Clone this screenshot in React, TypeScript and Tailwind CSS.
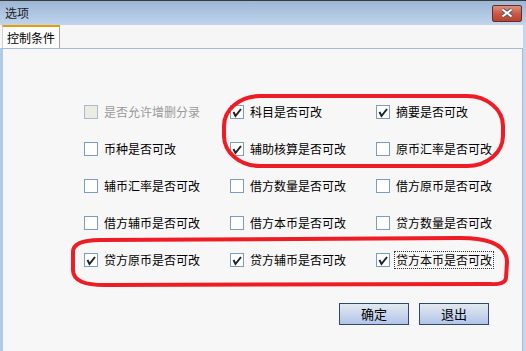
import React from "react";

type Item = { label: string; checked?: boolean; disabled?: boolean; focused?: boolean };

const rows: Item[][] = [
  [
    { label: "是否允许增删分录", disabled: true },
    { label: "科目是否可改", checked: true },
    { label: "摘要是否可改", checked: true },
  ],
  [
    { label: "币种是否可改" },
    { label: "辅助核算是否可改", checked: true },
    { label: "原币汇率是否可改" },
  ],
  [
    { label: "辅币汇率是否可改" },
    { label: "借方数量是否可改" },
    { label: "借方原币是否可改" },
  ],
  [
    { label: "借方辅币是否可改" },
    { label: "借方本币是否可改" },
    { label: "贷方数量是否可改" },
  ],
  [
    { label: "贷方原币是否可改", checked: true },
    { label: "贷方辅币是否可改", checked: true },
    { label: "贷方本币是否可改", checked: true, focused: true },
  ],
];

function CheckBox({ item }: { item: Item }) {
  return (
    <div className="flex h-[37px] w-[148px] items-center">
      <span
        className={
          item.disabled
            ? "flex h-[14px] w-[14px] shrink-0 items-center justify-center border border-[#a9bccf] bg-[#ecebe6]"
            : "flex h-[14px] w-[14px] shrink-0 items-center justify-center border border-[#7c9dbd] bg-white"
        }
      >
        {item.checked && (
          <svg width="12" height="12" viewBox="0 0 12 12">
            <path d="M2.5 6 L4.5 10 L10 3" fill="none" stroke="#222" strokeWidth="2" strokeLinejoin="miter" />
          </svg>
        )}
      </span>
      <span
        className={
          "ml-[5px] whitespace-nowrap px-[1px] text-[12px] leading-[16px] " +
          (item.disabled ? "text-[#9a9a9a]" : "text-black") +
          (item.focused ? " outline outline-1 outline-dotted outline-[#333]" : "")
        }
      >
        {item.label}
      </span>
    </div>
  );
}

export default function App() {
  return (
    <div className="relative flex h-[351px] w-[526px] flex-col overflow-hidden bg-[#f6f6f6] font-['Noto_Sans_CJK_SC',sans-serif]">
      {/* title bar */}
      <div className="flex h-[25px] shrink-0 items-center justify-between border-t border-[#3a3a3a] bg-gradient-to-b from-[#9cb6d4] to-[#c0d5ec] pl-[5px] pr-[4px]">
        <span className="text-[12px] text-[#1a1a1a]">选项</span>
        <button className="flex h-[17px] w-[30px] items-center justify-center rounded-[2px] border border-[#6b2a24] bg-gradient-to-b from-[#dc9283] via-[#c85a49] to-[#b9412f]">
          <svg width="14" height="10" viewBox="0 0 14 10">
            <path d="M2.5 1.5 L11.5 8.5 M11.5 1.5 L2.5 8.5" stroke="#5a5a5a" strokeWidth="4" />
            <path d="M2.5 1.5 L11.5 8.5 M11.5 1.5 L2.5 8.5" stroke="#fff" strokeWidth="2" />
          </svg>
        </button>
      </div>

      <div className="flex flex-1 flex-col border-r-[3px] border-[#c3d7ed]">
        {/* tab strip */}
        <div className="flex h-[23px] shrink-0 items-end pl-[2px]">
          <div className="flex h-[23px] w-[58px] items-center justify-center border-t-2 border-r border-l border-t-[#e5a000] border-r-[#a3a3a3] border-l-[#d0d0d0] bg-[#fdfdfd] text-[12px] text-black">
            控制条件
          </div>
        </div>

        {/* panel */}
        <div className="flex flex-1 flex-col border-t border-r border-l-[3px] border-t-[#a7bdd5] border-r-[#a5bcd6] border-l-[#b1cbe7] bg-[#f7f7f7] pt-[44px] pl-[81px]">
          {rows.map((row, i) => (
            <div key={i} className="flex">
              {row.map((item) => (
                <CheckBox key={item.label} item={item} />
              ))}
            </div>
          ))}
          <div className="mt-[25px] flex gap-[10px] pl-[255px]">
            <button className="h-[22px] w-[70px] border border-[#2c4a6c] bg-gradient-to-b from-[#e2e9f0] to-[#b3c4ea] text-[13px] text-black">
              确定
            </button>
            <button className="h-[22px] w-[70px] border border-[#2c4a6c] bg-gradient-to-b from-[#e2e9f0] to-[#b3c4ea] text-[13px] text-black">
              退出
            </button>
          </div>
        </div>
      </div>

      {/* red annotations drawn on top of the screenshot */}
      <svg className="pointer-events-none absolute left-0 top-0" width="526" height="351" viewBox="0 0 526 351">
        <rect x="224" y="96" width="279" height="70" rx="36" ry="30" fill="none" stroke="#ee1c25" strokeWidth="4" />
        <path
          d="M100 240 L460 238 Q507 238 507 262 L506 278 Q505 285 490 284 L108 285 Q73 286 73 270 L73 252 Q73 240 100 240 Z"
          fill="none"
          stroke="#ee1c25"
          strokeWidth="4"
        />
      </svg>
    </div>
  );
}
